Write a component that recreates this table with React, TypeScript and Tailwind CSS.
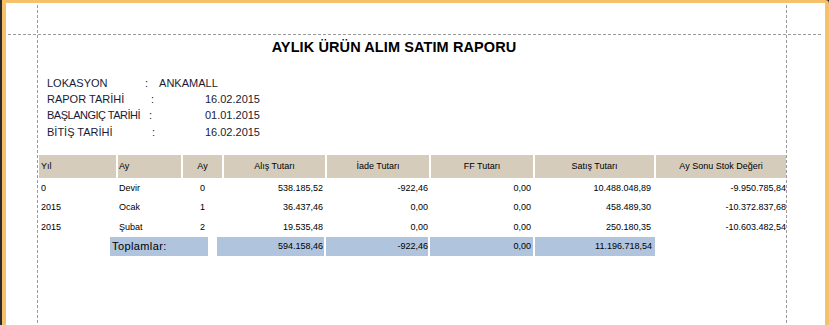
import React from "react";

const widths = ["w-[77px]", "w-[63px]", "w-[39px]", "w-[101px]", "w-[102px]", "w-[102px]", "w-[119px]", "w-[130px]"];

const headers: { t: string; a: string }[] = [
  { t: "Yıl", a: "justify-start pl-[2px]" },
  { t: "Ay", a: "justify-start pl-[1px]" },
  { t: "Ay", a: "justify-center" },
  { t: "Alış Tutarı", a: "justify-center" },
  { t: "İade Tutarı", a: "justify-center" },
  { t: "FF Tutarı", a: "justify-center" },
  { t: "Satış Tutarı", a: "justify-center" },
  { t: "Ay Sonu Stok Değeri", a: "justify-center" },
];

const cellAlign = [
  "justify-start pl-[2px]",
  "justify-start pl-[1px]",
  "justify-center",
  "justify-end pr-[2px]",
  "justify-end pr-[1px]",
  "justify-end pr-[2px]",
  "justify-end pr-[3px]",
  "justify-end pr-0",
];

const rows: { h: string; v: string[] }[] = [
  { h: "h-[19px]", v: ["0", "Devir", "0", "538.185,52", "-922,46", "0,00", "10.488.048,89", "-9.950.785,84"] },
  { h: "h-[19px]", v: ["2015", "Ocak", "1", "36.437,46", "0,00", "0,00", "458.489,30", "-10.372.837,68"] },
  { h: "h-[20px]", v: ["2015", "Şubat", "2", "19.535,48", "0,00", "0,00", "250.180,35", "-10.603.482,54"] },
];

const dashH = "bg-[repeating-linear-gradient(to_right,#9a9a9a_0px,#9a9a9a_3px,transparent_3px,transparent_5px)]";
const dashV = "bg-[repeating-linear-gradient(to_bottom,#9a9a9a_0px,#9a9a9a_3px,transparent_3px,transparent_5px)]";

export default function App() {
  return (
    <div className="w-[829px] h-[325px] overflow-hidden bg-[#2b2b2b] pl-[2px] font-['Liberation_Sans',Arial,sans-serif] text-black">
      <div className="relative h-[340px] bg-white border-t-[3px] border-l-[4px] border-r-[4px] border-[#f5c26b] rounded-tr-[4px] pl-[33px] pt-[36px]">
        {/* title */}
        <div className="w-[710px] h-[16px] flex justify-center text-[14.5px] font-bold leading-[16px] tracking-[0.1px]">
          AYLIK ÜRÜN ALIM SATIM RAPORU
        </div>

        {/* info block */}
        <div className="mt-[20px] ml-[8px] w-[213px] flex flex-col text-[11px] leading-[16px] text-[#1a1a33]">
          <div className="flex h-[16px]">
            <span className="w-[98px]">LOKASYON</span>
            <span>:</span>
            <span className="ml-[11px]">ANKAMALL</span>
          </div>
          <div className="flex h-[16px]">
            <span className="w-[104px]">RAPOR TARİHİ</span>
            <span>:</span>
            <span className="ml-auto">16.02.2015</span>
          </div>
          <div className="flex h-[17px]">
            <span className="w-[102px] tracking-[-0.5px]">BAŞLANGIÇ TARİHİ</span>
            <span>:</span>
            <span className="ml-auto">01.01.2015</span>
          </div>
          <div className="flex h-[16px]">
            <span className="w-[105px]">BİTİŞ TARİHİ</span>
            <span>:</span>
            <span className="ml-auto">16.02.2015</span>
          </div>
        </div>

        {/* table */}
        <div className="mt-[15px] flex flex-col text-[9px] leading-[11px]">
          <div className="flex gap-[2px] h-[23px]">
            {headers.map((h, i) => (
              <div key={i} className={`${widths[i]} ${h.a} flex items-center bg-[#d5ccbc] whitespace-nowrap`}>
                {h.t}
              </div>
            ))}
          </div>
          <div className="mt-[1px] flex flex-col">
            {rows.map((r, ri) => (
              <div key={ri} className={`flex gap-[2px] ${r.h}`}>
                {r.v.map((v, i) => (
                  <div key={i} className={`${widths[i]} ${cellAlign[i]} flex items-center whitespace-nowrap`}>
                    {v}
                  </div>
                ))}
              </div>
            ))}
          </div>
          <div className="flex h-[19px]">
            <div className="ml-[71px] w-[98px] flex items-center pl-[2px] bg-[#b0c4de] text-[11px] leading-[13px] tracking-[0.4px]">
              Toplamlar:
            </div>
            <div className="ml-[9px] w-[107px] flex items-center justify-end pr-[1px] bg-[#b0c4de]">594.158,46</div>
            <div className="ml-[2px] w-[102px] flex items-center justify-end pr-[0px] bg-[#b0c4de]">-922,46</div>
            <div className="ml-[2px] w-[103px] flex items-center justify-end pr-[2px] bg-[#b0c4de]">0,00</div>
            <div className="ml-[2px] w-[120px] flex items-center justify-end pr-[3px] bg-[#b0c4de]">11.196.718,54</div>
          </div>
        </div>

        {/* designer guide lines */}
        <div className={`absolute top-[31px] left-[2px] w-[814px] h-px ${dashH}`} />
        <div className={`absolute top-[2px] left-[31px] bottom-0 w-px ${dashV}`} />
        <div className={`absolute top-[2px] left-[780px] bottom-0 w-px ${dashV}`} />
      </div>
    </div>
  );
}
